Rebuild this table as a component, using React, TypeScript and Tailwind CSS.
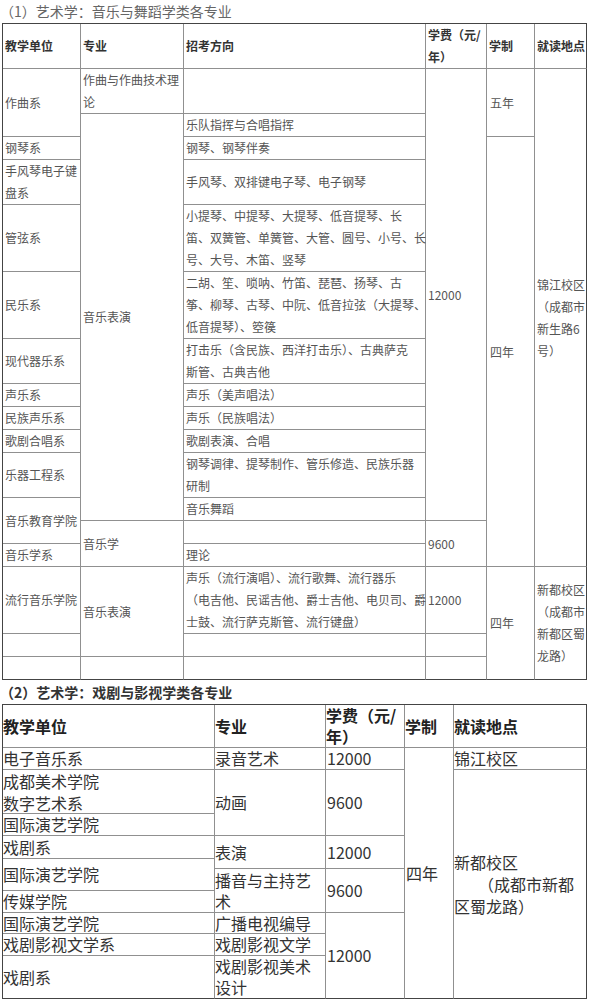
import React from 'react'

const FONT = "font-['Noto_Sans_CJK_SC','Microsoft_YaHei',sans-serif]"

interface CellProps {
    at: string
    edge?: boolean
    last?: boolean
    head?: boolean
    pad?: string
    children?: React.ReactNode
}

function Cell({ at, edge, last, head, pad = 'pl-[2px]', children }: CellProps) {
    return (
        <div
            className={[
                'flex min-w-0 items-center whitespace-nowrap border-r border-b',
                edge ? 'border-r-[#444]' : 'border-r-[#909090]',
                last ? 'border-b-[#444]' : 'border-b-[#909090]',
                head ? 'font-bold' : '',
                pad,
                at,
            ].join(' ')}
        >
            <div>{children}</div>
        </div>
    )
}

function MusicTable() {
    return (
        <div className="ml-[2px] grid w-[585px] grid-cols-[78px_103px_242px_61px_48px_52px] grid-rows-[45px_45px_23px_23px_45px_67px_67px_45px_23px_23px_23px_45px_23px_23px_23px_67px_23px_23px] border-l border-t border-[#444] text-[12px] leading-[22px] text-[#555]">
            {/* header */}
            <Cell at="col-start-1 row-start-1 text-[#333]" head>教学单位</Cell>
            <Cell at="col-start-2 row-start-1 text-[#333]" head>专业</Cell>
            <Cell at="col-start-3 row-start-1 text-[#333]" head>招考方向</Cell>
            <Cell at="col-start-4 row-start-1 text-[#333]" head>学费（元/<br />年）</Cell>
            <Cell at="col-start-5 row-start-1 text-[#333]" head>学制</Cell>
            <Cell at="col-start-6 row-start-1 text-[#333]" head edge>就读地点</Cell>

            {/* 教学单位 */}
            <Cell at="col-start-1 row-start-2 row-span-2">作曲系</Cell>
            <Cell at="col-start-1 row-start-4">钢琴系</Cell>
            <Cell at="col-start-1 row-start-5">手风琴电子键<br />盘系</Cell>
            <Cell at="col-start-1 row-start-6">管弦系</Cell>
            <Cell at="col-start-1 row-start-7">民乐系</Cell>
            <Cell at="col-start-1 row-start-8">现代器乐系</Cell>
            <Cell at="col-start-1 row-start-9">声乐系</Cell>
            <Cell at="col-start-1 row-start-10">民族声乐系</Cell>
            <Cell at="col-start-1 row-start-11">歌剧合唱系</Cell>
            <Cell at="col-start-1 row-start-12">乐器工程系</Cell>
            <Cell at="col-start-1 row-start-13 row-span-2">音乐教育学院</Cell>
            <Cell at="col-start-1 row-start-15">音乐学系</Cell>
            <Cell at="col-start-1 row-start-16">流行音乐学院</Cell>
            <Cell at="col-start-1 row-start-17" />
            <Cell at="col-start-1 row-start-18" last />

            {/* 专业 */}
            <Cell at="col-start-2 row-start-2">作曲与作曲技术理<br />论</Cell>
            <Cell at="col-start-2 row-start-3 row-span-11">音乐表演</Cell>
            <Cell at="col-start-2 row-start-14 row-span-2">音乐学</Cell>
            <Cell at="col-start-2 row-start-16 row-span-2">音乐表演</Cell>
            <Cell at="col-start-2 row-start-18" last />

            {/* 招考方向 */}
            <Cell at="col-start-3 row-start-2" />
            <Cell at="col-start-3 row-start-3">乐队指挥与合唱指挥</Cell>
            <Cell at="col-start-3 row-start-4">钢琴、钢琴伴奏</Cell>
            <Cell at="col-start-3 row-start-5">手风琴、双排键电子琴、电子钢琴</Cell>
            <Cell at="col-start-3 row-start-6">
                小提琴、中提琴、大提琴、低音提琴、长<br />笛、双簧管、单簧管、大管、圆号、小号、长<br />号、大号、木笛、竖琴
            </Cell>
            <Cell at="col-start-3 row-start-7">
                二胡、笙、唢呐、竹笛、琵琶、扬琴、古<br />筝、柳琴、古琴、中阮、低音拉弦（大提琴、<br />低音提琴）、箜篌
            </Cell>
            <Cell at="col-start-3 row-start-8">打击乐（含民族、西洋打击乐）、古典萨克<br />斯管、古典吉他</Cell>
            <Cell at="col-start-3 row-start-9">声乐（美声唱法）</Cell>
            <Cell at="col-start-3 row-start-10">声乐（民族唱法）</Cell>
            <Cell at="col-start-3 row-start-11">歌剧表演、合唱</Cell>
            <Cell at="col-start-3 row-start-12">钢琴调律、提琴制作、管乐修造、民族乐器<br />研制</Cell>
            <Cell at="col-start-3 row-start-13">音乐舞蹈</Cell>
            <Cell at="col-start-3 row-start-14" />
            <Cell at="col-start-3 row-start-15">理论</Cell>
            <Cell at="col-start-3 row-start-16">
                声乐（流行演唱）、流行歌舞、流行器乐<br />（电吉他、民谣吉他、爵士吉他、电贝司、爵<br />士鼓、流行萨克斯管、流行键盘）
            </Cell>
            <Cell at="col-start-3 row-start-17" />
            <Cell at="col-start-3 row-start-18" last />

            {/* 学费 */}
            <Cell at="col-start-4 row-start-2 row-span-12">12000</Cell>
            <Cell at="col-start-4 row-start-14 row-span-2">9600</Cell>
            <Cell at="col-start-4 row-start-16">12000</Cell>
            <Cell at="col-start-4 row-start-17" />
            <Cell at="col-start-4 row-start-18" last />

            {/* 学制 */}
            <Cell at="col-start-5 row-start-2 row-span-2" pad="pl-[3px]">五年</Cell>
            <Cell at="col-start-5 row-start-4 row-span-12" pad="pl-[3px]">四年</Cell>
            <Cell at="col-start-5 row-start-16 row-span-3" pad="pl-[3px]" last>四年</Cell>

            {/* 就读地点 */}
            <Cell at="col-start-6 row-start-2 row-span-14" edge>
                锦江校区<br />（成都市<br />新生路6<br />号）
            </Cell>
            <Cell at="col-start-6 row-start-16 row-span-3" edge last>
                新都校区<br />（成都市<br />新都区蜀<br />龙路）
            </Cell>
        </div>
    )
}

function DramaTable() {
    return (
        <div className="ml-[2px] grid w-[585px] grid-cols-[212px_111px_79px_49px_133px] grid-rows-[43px_22px_44px_22px_23px_10px_22px_22px_21px_22px_43px] border-l border-t border-[#444] text-[16px] leading-[21px] text-[#333]">
            <Cell at="col-start-1 row-start-1 text-[#222]" pad="pl-0" head>教学单位</Cell>
            <Cell at="col-start-2 row-start-1 text-[#222]" pad="pl-0" head>专业</Cell>
            <Cell at="col-start-3 row-start-1 text-[#222]" pad="pl-0" head>学费（元/<br />年）</Cell>
            <Cell at="col-start-4 row-start-1 text-[#222]" pad="pl-0" head>学制</Cell>
            <Cell at="col-start-5 row-start-1 text-[#222]" pad="pl-0" head edge>就读地点</Cell>

            <Cell at="col-start-1 row-start-2" pad="pl-0">电子音乐系</Cell>
            <Cell at="col-start-1 row-start-3" pad="pl-0">
                <div className="leading-[22px]">成都美术学院<br />数字艺术系</div>
            </Cell>
            <Cell at="col-start-1 row-start-4" pad="pl-0">国际演艺学院</Cell>
            <Cell at="col-start-1 row-start-5" pad="pl-0">戏剧系</Cell>
            <Cell at="col-start-1 row-start-6 row-span-2" pad="pl-0">国际演艺学院</Cell>
            <Cell at="col-start-1 row-start-8" pad="pl-0">传媒学院</Cell>
            <Cell at="col-start-1 row-start-9" pad="pl-0">国际演艺学院</Cell>
            <Cell at="col-start-1 row-start-10" pad="pl-0">戏剧影视文学系</Cell>
            <Cell at="col-start-1 row-start-11" pad="pl-0" last>戏剧系</Cell>

            <Cell at="col-start-2 row-start-2" pad="pl-0">录音艺术</Cell>
            <Cell at="col-start-2 row-start-3 row-span-2" pad="pl-0">动画</Cell>
            <Cell at="col-start-2 row-start-5 row-span-2" pad="pl-0">表演</Cell>
            <Cell at="col-start-2 row-start-7 row-span-2" pad="pl-0">播音与主持艺<br />术</Cell>
            <Cell at="col-start-2 row-start-9" pad="pl-0">广播电视编导</Cell>
            <Cell at="col-start-2 row-start-10" pad="pl-0">戏剧影视文学</Cell>
            <Cell at="col-start-2 row-start-11" pad="pl-0" last>戏剧影视美术<br />设计</Cell>

            <Cell at="col-start-3 row-start-2" pad="pl-[1px]">12000</Cell>
            <Cell at="col-start-3 row-start-3 row-span-2" pad="pl-[1px]">9600</Cell>
            <Cell at="col-start-3 row-start-5 row-span-2" pad="pl-[1px]">12000</Cell>
            <Cell at="col-start-3 row-start-7 row-span-2" pad="pl-[1px]">9600</Cell>
            <Cell at="col-start-3 row-start-9 row-span-3" pad="pl-[1px]" last>12000</Cell>

            <Cell at="col-start-4 row-start-2 row-span-10" pad="pl-[1px]" last>四年</Cell>

            <Cell at="col-start-5 row-start-2" pad="pl-0" edge>锦江校区</Cell>
            <Cell at="col-start-5 row-start-3 row-span-9" pad="pl-0" edge last>
                <div className="leading-[22px]">新都校区<br />　　（成都市新都<br />区蜀龙路）</div>
            </Cell>
        </div>
    )
}

export default function App() {
    return (
        <div className={`w-[589px] bg-white ${FONT}`}>
            <div className="h-[23px] text-[14px] leading-[23px] text-[#666]">（1）艺术学：音乐与舞蹈学类各专业</div>
            <MusicTable />
            <div className="h-[24px] text-[14px] font-bold leading-[24px] text-[#333]">（2）艺术学：戏剧与影视学类各专业</div>
            <DramaTable />
        </div>
    )
}
